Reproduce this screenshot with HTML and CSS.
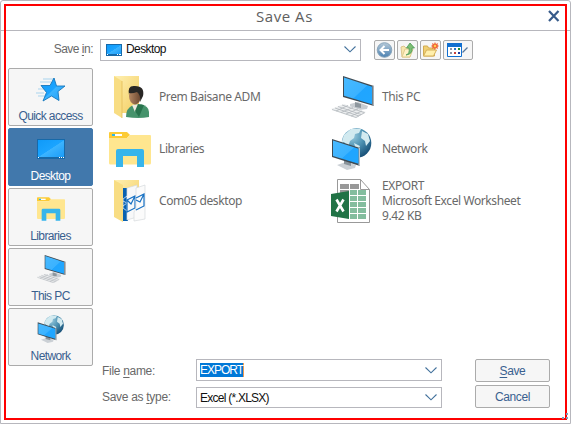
FILE: index.html
```html
<!DOCTYPE html>
<html lang="en">
<head>
<meta charset="utf-8">
<title>Save As</title>
<link rel="stylesheet" href="styles.css">
</head>
<body>
<svg class="defs" width="0" height="0" aria-hidden="true">
  <defs>
    <linearGradient id="screen" x1="0" y1="0" x2="1" y2="1"><stop offset="0" stop-color="#48baff"/><stop offset=".55" stop-color="#3bb2ff"/><stop offset=".57" stop-color="#20a5ff"/><stop offset="1" stop-color="#20a7ff"/></linearGradient>
    <linearGradient id="blue" x1="0" y1="0" x2="1" y2="1"><stop offset="0" stop-color="#0f9af9"/><stop offset=".5" stop-color="#1ba4ff"/><stop offset=".52" stop-color="#3cb4ff"/><stop offset="1" stop-color="#1b9cf8"/></linearGradient>
    <linearGradient id="folder" x1="0" y1="0" x2="1" y2="1"><stop offset="0" stop-color="#fff0b2"/><stop offset="1" stop-color="#f3cd60"/></linearGradient>
    <radialGradient id="globe" cx=".35" cy=".25" r=".8"><stop offset="0" stop-color="#9dcde0"/><stop offset=".5" stop-color="#4c91b2"/><stop offset="1" stop-color="#154d75"/></radialGradient>
    <linearGradient id="ball" x1="0" y1="0" x2="0" y2="1"><stop offset="0" stop-color="#b5c9d8"/><stop offset="1" stop-color="#4c82b2"/></linearGradient>
    <linearGradient id="skin"><stop offset="0" stop-color="#b48661"/><stop offset="1" stop-color="#68442f"/></linearGradient>
  </defs>
  <symbol id="pc" viewBox="0 0 43 42">
    <path d="M19 28l8-2 10 4-1 3-8 1-9-3z" fill="#c8cdd2"/><path d="M24 26l6 2v4l-6-1z" fill="#8e979e"/>
    <path d="M12 0l31 10v20L12 21z" fill="#3f4b54"/><path d="M41.500 9.500l1.500.5v20l-1.500-.5z" fill="#a9b2b8"/>
    <path d="M13 1.500l28 9.300v17.400L13 19.800z" fill="url(#screen)"/>
    <path d="M0 33l13-5 22 8-10 6z" fill="#eceeef"/>
    <path d="M1 33.500l24 8 9-5M4 32l24 8M7 30.500l23 8M11 29l22 7.500M5 35l12-5.500M10 36.500l12-5M15 38l12-5M20 40l11-5" fill="none" stroke="#b1b6bb" stroke-width=".8"/>
  </symbol>
  <symbol id="net" viewBox="0 0 42 42">
    <circle cx="25.500" cy="15" r="14.800" fill="url(#globe)"/>
    <path d="M13 7l7-6 10 0-2 4-4 1-1 4-4 3-2 6-4-5-3 2zM31 3l6 3 2 7-4 5-1-5-4-3zM23 15l6 3-3 7z" fill="#d2eaf0"/>
    <path d="M6 37l9-3 10 3-1 3-8 2z" fill="#cbd0d5"/><path d="M13 31l7 2v5l-7-2z" fill="#89939a"/>
    <path d="M1 11l28 9v18L1 29z" fill="#3e4a53"/><path d="M27.500 19.500l1.500.5v18l-1.500-.4z" fill="#bcc4c9"/>
    <path d="M2 12.600l25.500 8.200v15L2 28z" fill="url(#screen)"/>
  </symbol>
  <symbol id="lib" viewBox="0 0 42 35">
    <path d="M0 1q0-1 1-1h17l3 3-3 3H0z" fill="#fccb35"/><path d="M0 6h18l3-3h20q1 0 1 1v27q0 1.500-1.500 1.500h-39Q0 32.500 0 31z" fill="#ffe68f"/>
    <path d="M3 2h10v2H3z" fill="#fff"/><path d="M3 2h3v2H3z" fill="#2db7ea"/>
    <path d="M7 19q0-2 2-2h24q2 0 2 2v16h-7V24H14v11H7z" fill="#37b5eb"/>
  </symbol>
</svg>

<main class="window">
  <header class="titlebar">
    <h1 class="title">Save As</h1>
    <svg class="close" width="12" height="12" viewBox="0 0 12 12"><path d="M1 1l9.500 10M10.500 1L1 11" stroke="#375b8a" stroke-width="2.200"/></svg>
  </header>

  <section class="location">
    <label class="location-label">Save <u>i</u>n:</label>
    <div class="combo location-combo">
      <svg class="combo-icon" width="16" height="12" viewBox="0 0 16 12"><path d="M0 0h16v12H0z" fill="#1769a9"/><path d="M1 1h14v9H1z" fill="url(#blue)"/><path d="M1 10.500h1M11 10.500h1M13 10.500h2" stroke="#fff"/></svg>
      <span class="combo-text">Desktop</span>
      <svg class="chevron" width="12" height="7" viewBox="0 0 12 7"><path d="M.5.5L6 5.800 11.500.5" fill="none" stroke="#42719c" stroke-width="1.100"/></svg>
    </div>
    <div class="tools">
      <button class="tool"><svg width="17" height="16" viewBox="0 0 17 16"><circle cx="8.500" cy="8" r="7.300" fill="url(#ball)" stroke="#8aa5ba"/><path d="M8.500 4L4.500 8l4 4M5 8h8" fill="none" stroke="#fff" stroke-width="2"/></svg></button>
      <button class="tool"><svg width="17" height="16" viewBox="0 0 17 16"><path d="M2 5l3-1 2 2h4v9H3z" fill="#f7e6ae" stroke="#dcc68d"/><path d="M3 15l3-8h8l-3 8z" fill="#fff3c8" stroke="#e0cb8e"/><path d="M7 13q4-1 3-7H7.500l3.500-5 4.500 5H13q1 6-6 7z" fill="#7dbf73" stroke="#4b9b58" stroke-width=".8"/></svg></button>
      <button class="tool"><svg width="17" height="16" viewBox="0 0 17 16"><path d="M1.500 14V4h4l1 2h6v8z" fill="#f0cf72" stroke="#d1ab51"/><path d="M1.500 14l3-6h10l-3 6z" fill="#ffefac" stroke="#d5b05a"/><path d="M13 0l1 2 2-1-.5 2 1.500 1-1.500 1 .5 2-2-1-1 2-1-2-2 1 .5-2L9 4l1.500-1L10 1l2 1z" fill="#f0693b"/><circle cx="13" cy="4" r="1.200" fill="#ffd04c"/></svg></button>
      <button class="tool tool-wide"><svg width="22" height="14" viewBox="0 0 22 14"><path d="M.5.5h14v13H.5z" fill="#fff" stroke="#116fd0"/><path d="M0 0h15v4H0z" fill="#116fd0"/><path d="M3 5h2v2H3zM3 9h2v2H3z" fill="#8f93a3"/><path d="M7 5h2v2H7z" fill="#2775ca"/><path d="M11 5h2v2h-2z" fill="#238b35"/><path d="M7 9h2v2H7z" fill="#c8403b"/><path d="M11 9h2v2h-2z" fill="#1c3a9a"/><path d="M15.500 9.500l5-5" stroke="#54769b" stroke-width="1.200"/></svg></button>
    </div>
  </section>

  <div class="body">
    <nav class="places">
      <button class="place"><svg class="place-icon" width="29" height="26" viewBox="0 0 29 26"><path d="M7 2h12M4 5h11M2 12h8M0 16h8M2 19h8" stroke="#a9d4ee"/><path d="M18 1l2.500 8H29l-7 5.500 1 9-7.500-4.500-8.500 5 3.500-8.500L5 8.500h9z" fill="url(#blue)" stroke="#1677bc" stroke-width=".9"/></svg><span>Quick access</span></button>
      <button class="place place-active"><svg class="place-icon" width="28" height="20" viewBox="0 0 28 20"><path d="M0 0h28v20H0z" fill="#1769a9"/><path d="M1 1h26v17H1z" fill="url(#blue)"/><path d="M1 18.500h1M22 18.500h1M24 18.500h1M26 18.500h1" stroke="#fff"/></svg><span>Desktop</span></button>
      <button class="place"><svg class="place-icon" width="28" height="24"><use href="#lib"/></svg><span>Libraries</span></button>
      <button class="place"><svg class="place-icon pc-small" width="30" height="28"><use href="#pc"/></svg><span>This PC</span></button>
      <button class="place"><svg class="place-icon net-small" width="28" height="28"><use href="#net"/></svg><span>Network</span></button>
    </nav>

    <div class="content">
      <section class="files">
        <div class="file"><div class="file-icon"><svg width="42" height="42" viewBox="0 0 42 42"><path d="M5 0h25v37H12z" fill="url(#folder)"/><path d="M5 0l8 5v37l-8-5z" fill="#f8dd83"/><path d="M13 5v37" stroke="#e3bc56" stroke-width=".8"/><path d="M17 41q0-9 7-12l7-1q9 2 9 8v5q-10 2-23 0z" fill="#46936c"/><path d="M23 29l3 7 6-8z" fill="#eee9df"/><path d="M29 28l-3 7 4 6 5-12z" fill="#28734d"/><ellipse cx="26" cy="20" rx="6" ry="8.500" fill="url(#skin)"/><path d="M20 19q-2-10 6-9 10 0 8 10l-3 6q1-7-3-10-5 2-8 1z" fill="#292725"/></svg></div><span>Prem Baisane ADM</span></div>
        <div class="file"><div class="file-icon"><svg width="43" height="42"><use href="#pc"/></svg></div><span>This PC</span></div>
        <div class="file"><div class="file-icon"><svg width="42" height="35"><use href="#lib"/></svg></div><span>Libraries</span></div>
        <div class="file"><div class="file-icon"><svg width="42" height="42"><use href="#net"/></svg></div><span>Network</span></div>
        <div class="file"><div class="file-icon"><svg width="42" height="42" viewBox="0 0 42 42"><path d="M5 0h25v37H14z" fill="url(#folder)"/><path d="M14 8h5v33h-5z" fill="#0861b1"/><path d="M18 8l10-3v32l-10 3z" fill="#f7f8f9" stroke="#d5dadd" stroke-width=".7"/><path d="M14 19l4-3v15l-4-3zM14 21l4 2-4 3" fill="#0861b1" stroke="#fff" stroke-width=".7"/><path d="M18 20l8-4v12l-8 4zM18 20l4 4 4-8" fill="none" stroke="#1670c3" stroke-width="1.200"/><path d="M27 8l9-3v34l-11 2v-9l2-3z" fill="#fbfbfb" stroke="#d5dadd" stroke-width=".7"/><path d="M27 18l8-4v12l-8 4M27 20l4 2 4-8" fill="none" stroke="#1670c3" stroke-width="1.200"/><path d="M5 0l9 5v37l-9-5z" fill="#f8dd83"/></svg></div><span>Com05 desktop</span></div>
        <div class="file"><div class="file-icon"><svg width="40" height="44" viewBox="0 0 40 44"><path d="M6.500.5h23l9 10v33h-32z" fill="#fff" stroke="#999"/><path d="M29.500.5v10h9" fill="none" stroke="#999"/><path d="M9 5h9v5H9zM19 5h9v5h-9zM9 11h9v5H9z" fill="#989898"/><path d="M19 11h7v5h-7zM27 11h8v5h-8zM19 17h7v5h-7zM27 17h8v5h-8zM19 23h7v5h-7zM27 23h8v5h-8zM19 29h7v5h-7zM27 29h8v5h-8zM19 35h7v5h-7zM27 35h8v5h-8z" fill="#83bd9e"/><path d="M0 15l18-3v28L0 37z" fill="#217346"/><path d="M5.500 20.500l7 12M12.500 20.500l-7 12" stroke="#fff" stroke-width="2.600"/></svg></div><div class="details"><div>EXPORT</div><div>Microsoft Excel Worksheet</div><div>9.42 KB</div></div></div>
      </section>

      <form class="form">
        <label>File <u>n</u>ame:</label>
        <div class="combo form-combo"><span class="selected">EXPORT</span><svg class="chevron" width="12" height="7" viewBox="0 0 12 7"><path d="M.5.5L6 5.800 11.500.5" fill="none" stroke="#42719c" stroke-width="1.100"/></svg></div>
        <button type="button" class="action"><u>S</u>ave</button>
        <label>Save as <u>t</u>ype:</label>
        <div class="combo form-combo type-combo"><span class="type-text">Excel (*.XLSX)</span><svg class="chevron" width="12" height="7" viewBox="0 0 12 7"><path d="M.5.5L6 5.800 11.500.5" fill="none" stroke="#42719c" stroke-width="1.100"/></svg></div>
        <button type="button" class="action">Cancel</button>
      </form>
    </div>
  </div>
  <div class="highlight"></div>
  <svg class="grip" width="6" height="6" viewBox="0 0 6 6"><path d="M4 0h2v2H4zM0 4h2v2H0zM4 4h2v2H4z" fill="#7e9bb8"/></svg>
</main>
</body>
</html>
```

FILE: styles.css
```css
* { box-sizing: border-box; }
body { margin: 0; background: #fff; }
.defs { position: absolute; }
svg { display: block; flex: none; }
button { font: inherit; color: inherit; letter-spacing: inherit; padding: 0; margin: 0; background: #f6f6f6; border: 1px solid #ababab; border-radius: 2px; }
u { text-underline-offset: 2px; text-decoration-thickness: 1px; }

.window {
  position: relative;
  width: 571px;
  height: 424px;
  border: 1px solid #b7b7bd;
  border-radius: 3px 3px 0 0;
  background: #fff;
  color: #696969;
  font: 12px/15px "Liberation Sans", Arial, sans-serif;
  letter-spacing: -0.2px;
  white-space: nowrap;
}
.titlebar { display: flex; align-items: center; height: 30px; border-bottom: 1px solid #b7b7bd; padding: 0 10px 0 255px; }
.title { flex: 1; margin: 0; font: 15px/20px "Open Sans", sans-serif; letter-spacing: 0.55px; color: #606060; }

.location { display: flex; align-items: center; height: 37px; }
.location-label { width: 99px; padding-right: 7px; text-align: right; letter-spacing: -0.5px; }
.combo { display: flex; align-items: center; border: 1px solid #b7b7bd; background: #fff; color: #111; padding-right: 4px; }
.combo .chevron { margin-left: auto; }
.location-combo { width: 261px; height: 22px; padding-left: 5px; }
.combo-text { margin-left: 4px; letter-spacing: -0.6px; }
.tools { display: flex; gap: 2px; margin-left: 13px; }
.tool { display: flex; align-items: center; justify-content: center; width: 21px; height: 20px; }
.tool-wide { width: 30px; }

.body { display: flex; padding-left: 7px; }
.places { display: flex; flex-direction: column; gap: 2px; width: 85px; color: #39608f; letter-spacing: -0.6px; }
.place { display: flex; flex-direction: column; align-items: center; justify-content: flex-end; height: 58px; padding-bottom: 1px; }
.place-icon { margin-bottom: auto; margin-top: 8px; }
.place-active { background: #4178ac; border-color: #4178ac; color: #fff; }
.place-active .place-icon { margin-top: 10px; }
.pc-small { margin-top: 6px; }
.net-small { margin-top: 6px; }

.content { width: 460px; }
.files { display: grid; grid-template-columns: 222px 1fr; grid-auto-rows: 52px; padding: 3px 0 0 16px; height: 291px; font-family: "Noto Sans", sans-serif; letter-spacing: -0.4px; }
.file { display: flex; align-items: center; }
.file > span { padding-bottom: 1px; }
.file-icon { width: 43px; margin-right: 7px; }
.file:nth-child(even) .file-icon { margin-right: 8px; }
.details { padding-bottom: 2px; }
.form { display: grid; grid-template-columns: 94px 246px 75px; grid-template-rows: 23px 23px; row-gap: 3px; padding-left: 9px; align-items: center; }
.form label { padding-top: 2px; letter-spacing: -0.3px; }
.form-combo { height: 22px; padding-left: 3px; align-self: start; }
.type-combo { height: 21px; align-self: end; }
.selected { background: #0078d7; color: #fff; line-height: 14px; letter-spacing: -1px; border-right: 1px solid #ef994f; }
.type-text { letter-spacing: -0.75px; padding-top: 1px; }
.action { width: 75px; height: 23px; margin-left: 33px; color: #39608f; padding-top: 1px; letter-spacing: -0.4px; }
.highlight { position: absolute; left: 3px; top: 3px; width: 563px; height: 416px; border: 2px solid #fe0000; pointer-events: none; }
.grip { position: absolute; right: 2px; bottom: 4px; }
```
